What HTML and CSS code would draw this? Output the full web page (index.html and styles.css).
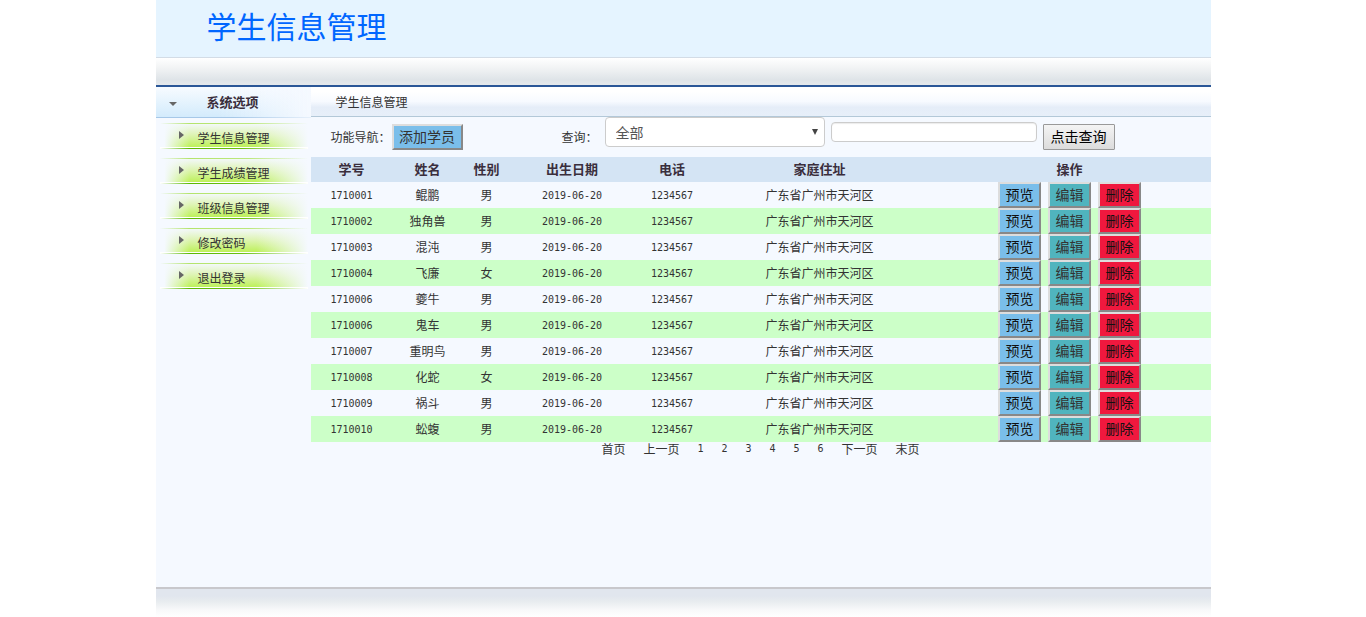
FILE: index.html
```html
<!DOCTYPE html>
<html lang="zh-CN">
<head>
<meta charset="utf-8">
<title>学生信息管理</title>
<link rel="stylesheet" href="styles.css">
</head>
<body>
<div class="page">
  <header class="banner"><h1 class="banner-title">学生信息管理</h1></header>
  <div class="band"></div>
  <div class="body">
    <nav class="side">
      <h2 class="side-head"><svg class="caret-down" viewBox="0 0 8 4" width="8" height="4" aria-hidden="true"><path d="M0 0h8L4 4z"/></svg>系统选项</h2>
      <ul class="menu">
        <li class="menu-item"><a class="menu-link" href="#">学生信息管理</a></li>
        <li class="menu-item"><a class="menu-link" href="#">学生成绩管理</a></li>
        <li class="menu-item"><a class="menu-link" href="#">班级信息管理</a></li>
        <li class="menu-item"><a class="menu-link" href="#">修改密码</a></li>
        <li class="menu-item"><a class="menu-link" href="#">退出登录</a></li>
      </ul>
    </nav>
    <main class="main">
      <div class="crumb">学生信息管理</div>
      <form class="tools">
        <span class="tools-label">功能导航：</span>
        <button class="btn btn-blue" type="button">添加学员</button>
        <label class="query-label" for="field">查询：</label>
        <div class="query">
          <span class="select-box"><select class="query-select" id="field"><option>全部</option></select></span>
          <input class="query-input" type="text" aria-label="关键字">
        </div>
        <button class="btn-search" type="button">点击查询</button>
      </form>
      <table class="grid">
        <colgroup><col class="c-id"><col class="c-name"><col class="c-sex"><col class="c-date"><col class="c-tel"><col class="c-addr"><col class="c-act"></colgroup>
        <thead><tr><th>学号</th><th>姓名</th><th>性别</th><th>出生日期</th><th>电话</th><th>家庭住址</th><th>操作</th></tr></thead>
        <tbody id="rows"></tbody>
      </table>
      <nav class="pager">
        <a href="#">首页</a><a href="#">上一页</a><a class="num" href="#">1</a><a class="num" href="#">2</a><a class="num" href="#">3</a><a class="num" href="#">4</a><a class="num" href="#">5</a><a class="num" href="#">6</a><a href="#">下一页</a><a href="#">末页</a>
      </nav>
    </main>
  </div>
  <footer class="foot"></footer>
</div>
<script src="app.js"></script>
</body>
</html>
```
FILE: app.js
```js
const students = [
  ['1710001', '鲲鹏', '男'],
  ['1710002', '独角兽', '男'],
  ['1710003', '混沌', '男'],
  ['1710004', '飞廉', '女'],
  ['1710006', '夔牛', '男'],
  ['1710006', '鬼车', '男'],
  ['1710007', '重明鸟', '男'],
  ['1710008', '化蛇', '女'],
  ['1710009', '祸斗', '男'],
  ['1710010', '蚣蝮', '男']
];
document.getElementById('rows').innerHTML = students.map(([id, name, sex]) => `
  <tr>
    <td class="num">${id}</td><td>${name}</td><td>${sex}</td>
    <td class="num">2019-06-20</td><td class="num">1234567</td><td>广东省广州市天河区</td>
    <td><div class="actions">
      <button class="btn btn-blue btn-dark" type="button">预览</button>
      <button class="btn btn-teal" type="button">编辑</button>
      <button class="btn btn-red" type="button">删除</button>
    </div></td>
  </tr>`).join('');
```
FILE: styles.css
```css
* { box-sizing: border-box; }
body {
  margin: 0;
  background: #fff;
  color: #333;
  font: 12px/16px "Noto Sans CJK SC", sans-serif;
}
a { color: inherit; text-decoration: none; }
button, input, select { font-family: inherit; }
.num { font-family: "DejaVu Sans Mono", monospace; font-size: 10px; }

.page {
  display: flex;
  flex-direction: column;
  max-width: 1055px;
  min-height: 100vh;
  margin: 0 auto;
  background: #f5f9ff;
}
.banner {
  height: 58px;
  padding: 4px 51px;
  background: #e5f4ff;
  border-bottom: 1px solid #d3dce6;
}
.banner-title {
  margin: 0;
  color: #0066ff;
  font-size: 30px;
  font-weight: 400;
  line-height: 42px;
}
.band {
  height: 29px;
  background: linear-gradient(#fff, #f2f4f5 35%, #dfe4e8 80%, #e5e9ec);
  border-bottom: 2px solid #2b5797;
}
.body { display: flex; flex: 1; }

.side { flex: 0 0 155px; }
.side-head {
  display: flex;
  align-items: center;
  gap: 30px;
  height: 31px;
  margin: 0;
  padding-left: 13px;
  border-bottom: 1px solid;
  border-image: linear-gradient(90deg, #a6c8e8 50%, #e8f1fb) 1;
  background: linear-gradient(90deg, rgba(245, 249, 255, 0) 40%, #f5f9ff), linear-gradient(#f7fbff, #d3ebfc);
  color: #3a2e3c;
  font-size: 13px;
}
.caret-down { margin-top: 4px; fill: #666; }
.menu { margin: 0; padding: 5px 3px 0 4px; list-style: none; }
.menu-item { height: 35px; }
.menu-link {
  display: flex;
  align-items: center;
  gap: 14px;
  height: 26px;
  padding: 4px 0 0 19px;
  background:
    linear-gradient(90deg, rgba(184, 232, 112, 0), #b4e46c 20%, #bce87c 60%, rgba(184, 232, 112, 0)) top / 100% 1px no-repeat,
    linear-gradient(90deg, rgba(92, 184, 0, 0), #5cb800 20%, #6cc010 55%, rgba(140, 220, 60, 0)) bottom / 100% 1px no-repeat,
    linear-gradient(#fff, #fff) 0 100% / 100% 2px no-repeat,
    linear-gradient(90deg, #f5f9ff 3%, rgba(245, 249, 255, 0) 20%, rgba(245, 249, 255, 0) 65%, #f5f9ff),
    linear-gradient(#f5f9ff, #def4b4 45%, #b8f04c);
}
.menu-link::before {
  content: "";
  margin-bottom: 6px;
  border: solid transparent;
  border-width: 4px 0 4px 5px;
  border-left-color: #666;
}

.main { flex: 1; min-width: 0; }
.crumb {
  height: 30px;
  padding: 7px 25px;
  background: linear-gradient(#fff 15%, #f7faff 50%, #e5edf8 70%, #e7eff9);
  border-bottom: 1px solid #b3c8d8;
}
.tools { display: flex; align-items: center; height: 40px; padding-left: 20px; }
.tools-label { width: 61px; }
.query-label { width: 43px; margin-left: 99px; }
.btn {
  height: 26px;
  padding: 0 5px 2px;
  border: 2px solid;
  border-color: #ddd #888 #888 #ddd;
  color: #333;
  font-size: 14px;
  line-height: 20px;
}
.btn-blue { background: #7abeea; }
.btn-dark { color: #111; }
.btn-teal { background: #50b4be; }
.btn-red { background: #f0183e; color: #111; }
.tools > .btn { width: 71px; }
.query { display: flex; align-items: center; gap: 6px; padding-bottom: 10px; }
.select-box { position: relative; }
.select-box::after {
  content: "";
  position: absolute;
  top: 12px;
  right: 7px;
  border: solid transparent;
  border-width: 6px 3px 0;
  border-top-color: #444;
}
.query-select {
  display: block;
  width: 220px;
  height: 30px;
  padding: 0 10px;
  appearance: none;
  background: #fff;
  border: 1px solid #ccc;
  border-radius: 4px;
  color: #555;
  font-size: 14px;
}
.query-input {
  width: 206px;
  height: 20px;
  padding: 0 6px;
  background: #fff;
  border: 1px solid #ccc;
  border-radius: 4px;
  box-shadow: inset 0 1px 1px rgba(0, 0, 0, 0.08);
}
.btn-search {
  width: 72px;
  height: 26px;
  margin-left: 6px;
  padding: 0 0 2px;
  background: linear-gradient(#f4f4f4, #dcdcdc);
  border: 1px solid #999;
  border-radius: 1px;
  color: #000;
  font-size: 14px;
  line-height: 20px;
}

.grid { width: 100%; table-layout: fixed; border-collapse: collapse; text-align: center; }
.c-id { width: 82px; }
.c-name { width: 70px; }
.c-sex { width: 48px; }
.c-date { width: 123px; }
.c-tel { width: 77px; }
.c-addr { width: 218px; }
.grid th { height: 25px; padding: 0 0 2px; background: #d4e4f4; color: #3a2e3c; font-size: 13px; }
.grid td { height: 26px; padding: 0; }
.grid td.num { padding-top: 2px; }
.grid tbody tr:nth-child(even) { background: #ccffc8; }
.actions { display: flex; justify-content: center; gap: 7px; }
.actions .btn { width: 43px; }
.pager { display: flex; justify-content: center; gap: 18px; line-height: 14px; }

.foot {
  height: 30px;
  background: linear-gradient(#e1e6ee, #e1e6ee 25%, #e8ecef 45%, #f8f9fa 75%, #fff);
  border-top: 2px solid #c8c8cc;
}
```
